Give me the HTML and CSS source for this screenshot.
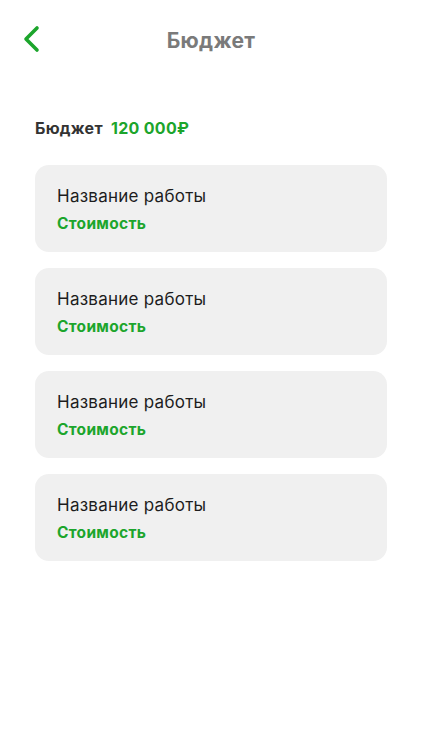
FILE: index.html
```html
<!DOCTYPE html>
<html lang="ru">
<head>
	<meta charset="utf-8">
	<title>Бюджет</title>
	<link rel="stylesheet" href="styles.css">
</head>
<body>
	<div class="header">
		<a class="back" href="#">
			<svg width="20" height="28" viewBox="0 0 20 28"><path d="M15 3 L4 14 L15 25" fill="none" stroke="#1ca52c" stroke-width="3.6" stroke-linecap="round" stroke-linejoin="round"/></svg>
		</a>
		<div class="title">Бюджет</div>
	</div>
	<div class="budget">Бюджет <span class="sum">120 000₽</span></div>
	<div class="list">
		<div class="card">
			<div class="name">Название работы</div>
			<div class="price">Стоимость</div>
		</div>
		<div class="card">
			<div class="name">Название работы</div>
			<div class="price">Стоимость</div>
		</div>
		<div class="card">
			<div class="name">Название работы</div>
			<div class="price">Стоимость</div>
		</div>
		<div class="card">
			<div class="name">Название работы</div>
			<div class="price">Стоимость</div>
		</div>
	</div>
</body>
</html>
```

FILE: styles.css
```css
* {box-sizing: border-box}
html, body {margin: 0; padding: 0; background: #fff;}
body {
	font-family: Inter, "Open Sans", sans-serif;
	color: #1d1d1d;
	width: 422px;
}
.header {
	position: relative;
	height: 80px;
	display: flex;
	align-items: center;
	justify-content: center;
}
.back {
	position: absolute;
	left: 22px;
	top: 25px;
	display: block;
	line-height: 0;
}
.title {
	font-size: 21px;
	font-weight: 700;
	color: #7a7a7a;
	letter-spacing: 0.3px;
}
.budget {
	margin: 38px 0 0 35px;
	font-size: 16px;
	font-weight: 700;
	letter-spacing: 0.3px;
	color: #333;
}
.budget .sum {
	color: #1ca52c;
	margin-left: 4px;
}
.list {
	margin: 27px 35px 0 35px;
	display: flex;
	flex-direction: column;
	gap: 16px;
}
.card {
	height: 87px;
	background: #f0f0f0;
	border-radius: 14px;
	padding: 21px 22px 0 22px;
}
.name {
	font-size: 17px;
	letter-spacing: 0.25px;
	color: #1d1d1d;
}
.price {
	margin-top: 8px;
	font-size: 15.5px;
	font-weight: 700;
	letter-spacing: 0.3px;
	color: #1ca52c;
}
```
